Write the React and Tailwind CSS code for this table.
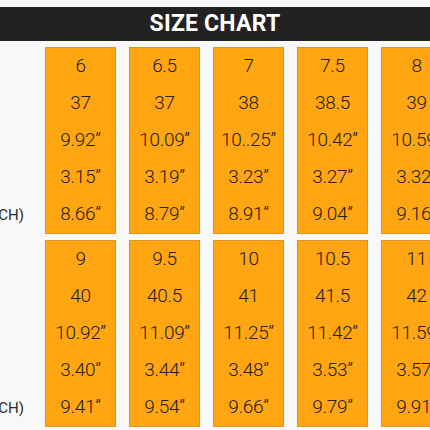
const rows = [
  [
    ['6', '37', '9.92”', '3.15”', '8.66”'],
    ['6.5', '37', '10.09”', '3.19”', '8.79”'],
    ['7', '38', '10..25”', '3.23”', '8.91”'],
    ['7.5', '38.5', '10.42”', '3.27”', '9.04”'],
    ['8', '39', '10.59”', '3.32”', '9.16”'],
  ],
  [
    ['9', '40', '10.92”', '3.40”', '9.41”'],
    ['9.5', '40.5', '11.09”', '3.44”', '9.54”'],
    ['10', '41', '11.25”', '3.48”', '9.66”'],
    ['10.5', '41.5', '11.42”', '3.53”', '9.79”'],
    ['11', '42', '11.59”', '3.57”', '9.91”'],
  ],
]

const Card = ({ values }) => (
  <div className="w-[71px] h-[187px] shrink-0 bg-[#ffa612] border border-[#d8952a] flex flex-col">
    {values.map((v, i) => (
      <div key={i} className="flex-1 flex items-center justify-center text-[19px] font-light tracking-[-0.3px] text-[#231d12] whitespace-nowrap">
        {v}
      </div>
    ))}
  </div>
)

const App = () => {
  return (
    <div className="w-[430px] h-[430px] overflow-hidden bg-[#f8f8f8] pt-[7px] font-['Roboto',sans-serif]">
      <div className="h-[34px] bg-[#222222] flex items-center justify-center">
        <h1 className="text-white text-[23px] font-bold tracking-[0.2px]">SIZE CHART</h1>
      </div>

      <div className="mt-[6px] flex flex-col gap-[6px]">
        {rows.map((row, r) => (
          <div key={r} className="flex">
            <div className="w-[45px] shrink-0 flex flex-col justify-end items-end pr-[21px]">
              <div className="h-[37px] flex items-center text-[15px] text-[#2b2b2b] whitespace-nowrap">CH)</div>
            </div>
            <div className="flex gap-[13px]">
              {row.map((values, i) => (
                <Card key={i} values={values} />
              ))}
            </div>
          </div>
        ))}
      </div>
    </div>
  )
}

export default App
